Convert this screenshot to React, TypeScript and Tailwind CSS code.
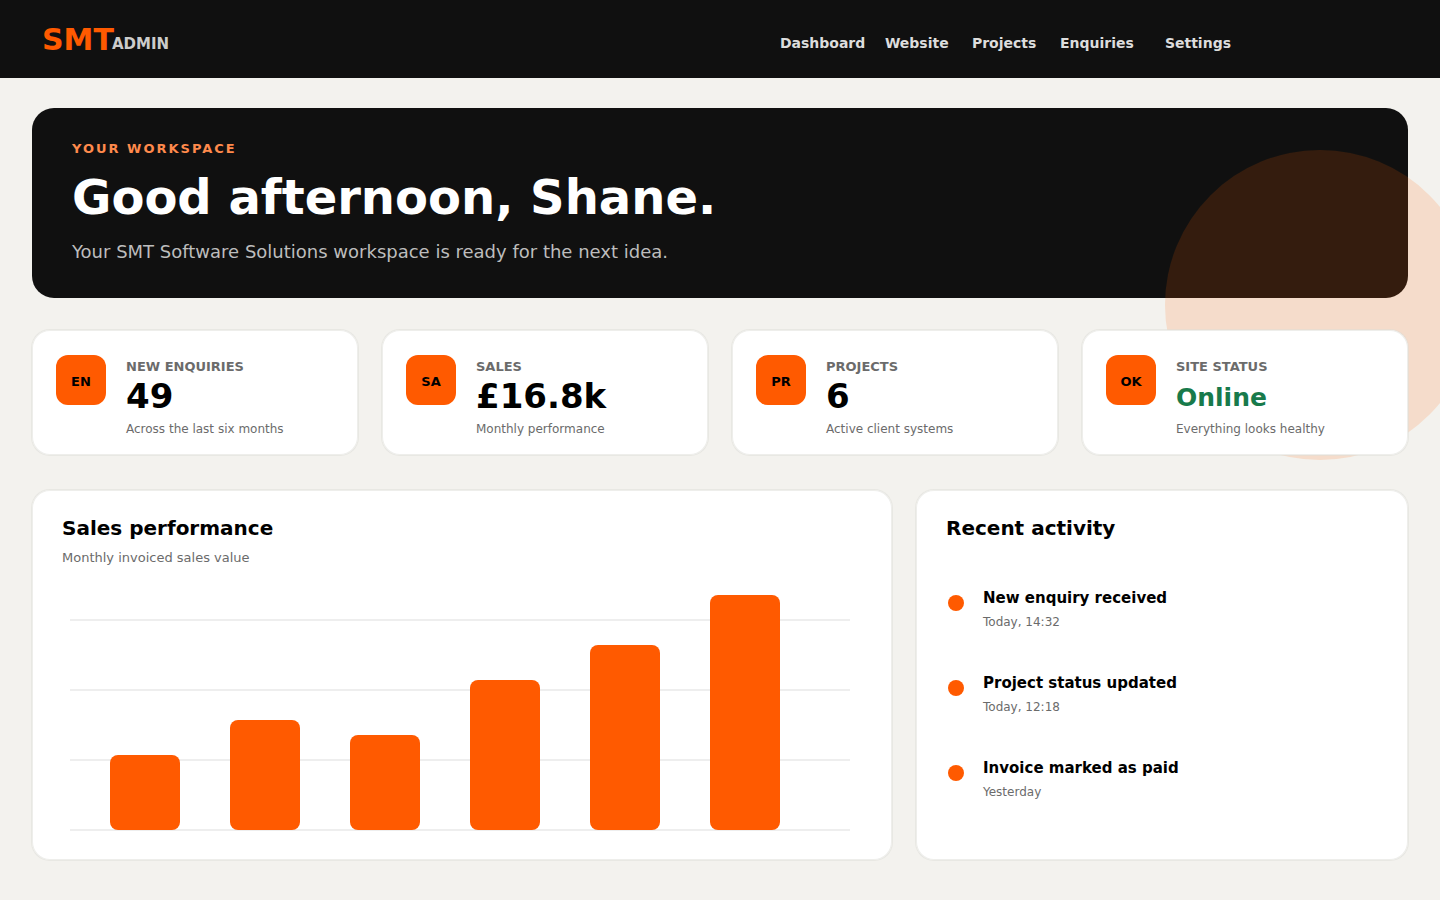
import { type ReactNode } from "react";

type Stat = {
  code: string;
  label: string;
  value: string;
  hint: string;
  online?: boolean;
};

const navLinks = ["Dashboard", "Website", "Projects", "Enquiries", "Settings"];

const stats: Stat[] = [
  { code: "EN", label: "NEW ENQUIRIES", value: "49", hint: "Across the last six months" },
  { code: "SA", label: "SALES", value: "£16.8k", hint: "Monthly performance" },
  { code: "PR", label: "PROJECTS", value: "6", hint: "Active client systems" },
  { code: "OK", label: "SITE STATUS", value: "Online", hint: "Everything looks healthy", online: true },
];

const monthlySales = [75, 110, 95, 150, 185, 235];

const activity = [
  { title: "New enquiry received", time: "Today, 14:32" },
  { title: "Project status updated", time: "Today, 12:18" },
  { title: "Invoice marked as paid", time: "Yesterday" },
];

function Card({ className, children }: { className: string; children: ReactNode }) {
  return (
    <section
      className={`relative rounded-[18px] bg-white shadow-[0_0_0_1px_rgba(222,221,216,0.5),inset_0_0_0_1px_rgba(222,221,216,0.5)] ${className}`}
    >
      {children}
    </section>
  );
}

function Header() {
  return (
    <header className="flex h-[78px] items-center justify-between bg-[#101010] pl-[42px] pr-[209px]">
      <a href="#" className="flex items-end pt-0.5 font-bold">
        <span className="text-[30px] leading-10 text-[#ff5a00]">SMT</span>
        <span className="-ml-0.5 text-[15px] leading-8 text-[#cccccc]">ADMIN</span>
      </a>
      <nav className="grid grid-cols-[105px_87px_88px_105px_auto] pt-2 text-sm font-bold text-[#dddddd]">
        {navLinks.map((link) => (
          <a key={link} href="#" className="hover:text-white">
            {link}
          </a>
        ))}
      </nav>
    </header>
  );
}

function Hero() {
  return (
    <section className="relative rounded-[22px] bg-[#101010] px-10 pb-8 pt-[33px]">
      <div className="absolute -right-[67px] top-[42px] size-[310px] rounded-full bg-[#ff5a00]/15" />
      <p className="text-[13px] font-bold leading-4 tracking-[2px] text-[#ff8a4c]">YOUR WORKSPACE</p>
      <h1 className="mt-2.5 text-5xl font-bold leading-[60px] text-white">Good afternoon, Shane.</h1>
      <p className="mt-[11px] text-lg leading-7 text-[#bdbdbd]">
        Your SMT Software Solutions workspace is ready for the next idea.
      </p>
    </section>
  );
}

function StatCard({ stat }: { stat: Stat }) {
  return (
    <Card className="flex gap-5 px-6 pb-[18px] pt-[25px]">
      <div className="flex size-[50px] shrink-0 items-center justify-center rounded-xl bg-[#ff5a00] pt-1 text-[13px] font-bold text-black">
        {stat.code}
      </div>
      <div className="pt-1">
        <h2 className="text-[13px] font-bold leading-4 text-[#6b6b6b]">{stat.label}</h2>
        <p
          className={
            stat.online
              ? "h-[42px] text-[25px] font-bold leading-[46px] text-[#187a4b]"
              : "h-[42px] text-[34px] font-bold leading-[42px] text-black"
          }
        >
          {stat.value}
        </p>
        <p className="mt-1 text-xs leading-4 text-[#6b6b6b]">{stat.hint}</p>
      </div>
    </Card>
  );
}

function SalesChart() {
  return (
    <svg viewBox="0 0 780 242" className="h-auto w-full" role="img" aria-label="Monthly invoiced sales value">
      {[30, 100, 170, 240].map((y) => (
        <line key={y} x1="0" x2="780" y1={y} y2={y} stroke="#eeeeee" strokeWidth="2" />
      ))}
      {monthlySales.map((value, index) => (
        <rect key={index} x={40 + index * 120} y={240 - value} width="70" height={value} rx="8" fill="#ff5a00" />
      ))}
    </svg>
  );
}

export default function App() {
  return (
    <div className="min-h-screen overflow-hidden bg-[#f3f2ee] font-['DejaVu_Sans',sans-serif]">
      <Header />

      <main className="px-8 pb-10 pt-[30px]">
        <Hero />

        <div className="mt-8 grid grid-cols-4 gap-6">
          {stats.map((stat) => (
            <StatCard key={stat.code} stat={stat} />
          ))}
        </div>

        <div className="mt-[35px] grid grid-cols-[860fr_492fr] gap-6">
          <Card className="px-[30px] pb-7 pt-6">
            <h2 className="text-xl font-bold leading-7 text-black">Sales performance</h2>
            <p className="mt-1.5 text-[13px] leading-5 text-[#6b6b6b]">Monthly invoiced sales value</p>
            <div className="mt-[22px] pl-2 pr-3">
              <SalesChart />
            </div>
          </Card>

          <Card className="px-[30px] pb-7 pt-6">
            <h2 className="text-xl font-bold leading-7 text-black">Recent activity</h2>
            <ul className="mt-[46px] flex flex-col gap-[43px] pl-0.5">
              {activity.map((item) => (
                <li key={item.title} className="flex gap-[19px]">
                  <span className="mt-[7px] size-4 rounded-full bg-[#ff5a00]" />
                  <div>
                    <p className="text-[15px] font-bold leading-5 text-black">{item.title}</p>
                    <p className="mt-1.5 text-xs leading-4 text-[#6b6b6b]">{item.time}</p>
                  </div>
                </li>
              ))}
            </ul>
          </Card>
        </div>
      </main>
    </div>
  );
}
